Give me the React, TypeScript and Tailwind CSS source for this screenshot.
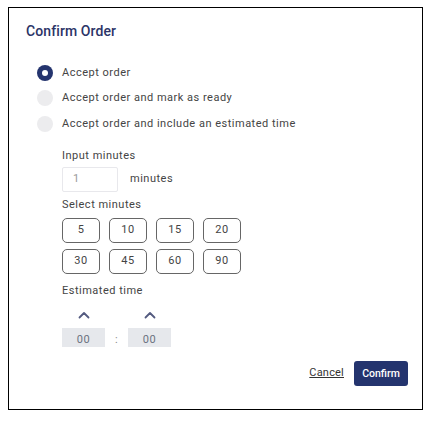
import React from 'react';

const options = [
  'Accept order',
  'Accept order and mark as ready',
  'Accept order and include an estimated time',
];

const presets = [
  [5, 10, 15, 20],
  [30, 45, 60, 90],
];

function Chevron() {
  return (
    <svg width="12" height="8" viewBox="0 0 12 8" fill="none">
      <path d="M1.5 6.5L6 2L10.5 6.5" stroke="#545b80" strokeWidth="1.8" strokeLinecap="round" strokeLinejoin="round" />
    </svg>
  );
}

export default function App() {
  return (
    <div className="w-[435px] h-[422px] bg-white font-['Roboto',sans-serif] pt-[7px] pl-[8px]">
      <div className="w-[415px] h-[403px] border border-black flex flex-col">
        {/* Title */}
        <h2 className="pt-[13px] pl-[17px] text-[14px] leading-[20px] font-medium tracking-[0.1px] text-[#2b3467]">Confirm Order</h2>

        {/* Radio options */}
        <div className="mt-[19px] pl-[28px]">
          {options.map((label, i) => (
            <div key={label} className="flex items-center h-[25.5px] gap-[9px]">
              {i === 0 ? (
                <span className="w-[16px] h-[16px] rounded-full bg-[#24346e] flex items-center justify-center">
                  <span className="w-[6px] h-[6px] rounded-full bg-white" />
                </span>
              ) : (
                <span className="w-[16px] h-[16px] rounded-full bg-[#ececee]" />
              )}
              <span className="text-[11px] tracking-[0.5px] text-[#444]">{label}</span>
            </div>
          ))}
        </div>

        {/* Estimated time section */}
        <div className="pl-[53px] text-[11px] tracking-[0.5px] text-[#444]">
          <p className="mt-[12px] leading-[14px]">Input minutes</p>
          <div className="mt-[4px] flex items-center gap-[12px]">
            <div className="w-[56px] h-[25px] border border-[#e8e8ec] rounded-[2px] pl-[10px] flex items-center text-[#9a9a9a]">1</div>
            <span>minutes</span>
          </div>
          <p className="mt-[6px] leading-[14px]">Select minutes</p>
          <div className="mt-[6px] flex flex-col gap-[6px]">
            {presets.map((row, r) => (
              <div key={r} className="flex gap-[9px]">
                {row.map((m) => (
                  <button
                    key={m}
                    className="w-[38px] h-[25px] border border-[#666] rounded-[5px] bg-white text-[11px] tracking-[0.5px] text-[#444] flex items-center justify-center"
                  >
                    {m}
                  </button>
                ))}
              </div>
            ))}
          </div>
          <p className="mt-[10px] leading-[14px]">Estimated time</p>
          <div className="mt-[13px] flex items-start">
            <div className="w-[43px] flex flex-col items-center">
              <Chevron />
              <div className="mt-[9px] w-[43px] h-[19px] bg-[#e6e8ec] text-center pt-[5px] leading-[14px] text-[#6b7280]">00</div>
            </div>
            <span className="w-[23px] text-center mt-[22px] leading-[14px] text-[#8a8a8a]">:</span>
            <div className="w-[43px] flex flex-col items-center">
              <Chevron />
              <div className="mt-[9px] w-[43px] h-[19px] bg-[#e6e8ec] text-center pt-[5px] leading-[14px] text-[#6b7280]">00</div>
            </div>
          </div>
        </div>

        {/* Footer */}
        <div className="mt-auto pb-[23px] pr-[14px] flex items-center justify-end gap-[10px]">
          <button className="text-[11px] tracking-[0.2px] text-[#333] underline">Cancel</button>
          <button className="w-[54px] h-[25px] rounded-[3px] bg-[#24346e] text-white text-[10.5px] font-medium">Confirm</button>
        </div>
      </div>
    </div>
  );
}
